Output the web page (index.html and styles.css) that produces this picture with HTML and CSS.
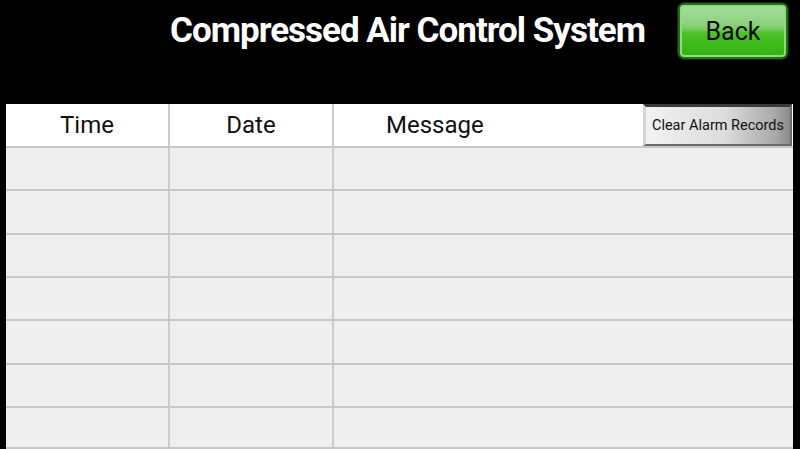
FILE: index.html
```html
<!DOCTYPE html>
<html>
<head>
<meta charset="utf-8">
<link rel="stylesheet" href="styles.css">
</head>
<body>
<div class="screen">
  <header class="topbar">
    <h1 class="title">Compressed Air Control System</h1>
    <button class="back-btn"><span class="back-label">Back</span></button>
  </header>
  <section class="table">
    <div class="thead">
      <div class="th th-time">Time</div>
      <div class="th th-date">Date</div>
      <div class="th th-msg">Message</div>
      <button class="clear-btn">Clear Alarm Records</button>
    </div>
    <div class="row"><div class="cell"></div><div class="cell"></div><div class="cell"></div></div>
    <div class="row"><div class="cell"></div><div class="cell"></div><div class="cell"></div></div>
    <div class="row"><div class="cell"></div><div class="cell"></div><div class="cell"></div></div>
    <div class="row"><div class="cell"></div><div class="cell"></div><div class="cell"></div></div>
    <div class="row"><div class="cell"></div><div class="cell"></div><div class="cell"></div></div>
    <div class="row"><div class="cell"></div><div class="cell"></div><div class="cell"></div></div>
    <div class="row"><div class="cell"></div><div class="cell"></div><div class="cell"></div></div>
  </section>
</div>
</body>
</html>
```

FILE: styles.css
```css
* { box-sizing: border-box; }
html, body {
  margin: 0;
  padding: 0;
  background: #000;
  width: 800px;
  height: 449px;
  overflow: hidden;
  font-family: Roboto, "Liberation Sans", sans-serif;
}
.screen {
  width: 800px;
  height: 449px;
  display: flex;
  flex-direction: column;
}
.topbar {
  height: 104px;
  display: flex;
  align-items: flex-start;
  padding: 3px 12px 0 170px;
}
.title {
  margin: 8px 0 0 0;
  width: 476px;
  color: #fff;
  font-family: Roboto, "Liberation Sans", sans-serif;
  font-weight: 700;
  font-size: 35px;
  line-height: 40px;
  letter-spacing: -1px;
  white-space: nowrap;
  text-align: left;
}
.back-btn {
  margin-left: 32px;
  width: 110px;
  height: 56px;
  border: 2px solid #2a6a1c;
  border-radius: 6px;
  padding: 0;
  background:
    linear-gradient(180deg, #a6dc9c 0%, #93d486 30%, #7fcd6f 44%, #4fc02c 54%, #3fbd1a 70%, #36b014 100%);
  box-shadow: inset 0 0 0 2px #8fdc7e, 0 0 0 1px #0b2a06;
  display: flex;
  align-items: center;
  justify-content: center;
  cursor: pointer;
}
.back-label {
  font-family: Roboto, "Liberation Sans", sans-serif;
  font-size: 25px;
  color: #0a0a0a;
  margin-top: 1px;
}
.table {
  margin-left: 6px;
  width: 787px;
  flex: 1;
  display: flex;
  flex-direction: column;
  background: #efefef;
}
.thead {
  height: 42px;
  display: grid;
  grid-template-columns: 162px 164px 311px 1fr;
  background: #fff;
}
.th {
  font-size: 24px;
  color: #111;
  display: flex;
  align-items: center;
}
.th-time, .th-date { justify-content: center; }
.th-date { border-left: 2px solid #cccccc; }
.th-msg { border-left: 2px solid #cccccc; padding-left: 52px; }
.clear-btn {
  margin: 0 1px 0 0;
  height: 42px;
  border: 2px solid #6b6b6b;
  border-top: 3px solid #3a3a3a;
  border-left: 3px solid #d6d6d6;
  background: linear-gradient(90deg, #f2f2f2 0%, #dcdcdc 55%, #a8a8a8 90%, #8a8a8a 100%);
  font-family: Roboto, "Liberation Sans", sans-serif;
  font-size: 14.5px;
  color: #111;
  padding: 0;
  white-space: nowrap;
}
.row {
  flex: 1;
  display: grid;
  grid-template-columns: 162px 164px 1fr;
  border-top: 2px solid #c8c8c8;
}
.row:last-child { border-bottom: 2px solid #c8c8c8; flex: 0 0 43px; }
.cell + .cell { border-left: 2px solid #cccccc; }
```
